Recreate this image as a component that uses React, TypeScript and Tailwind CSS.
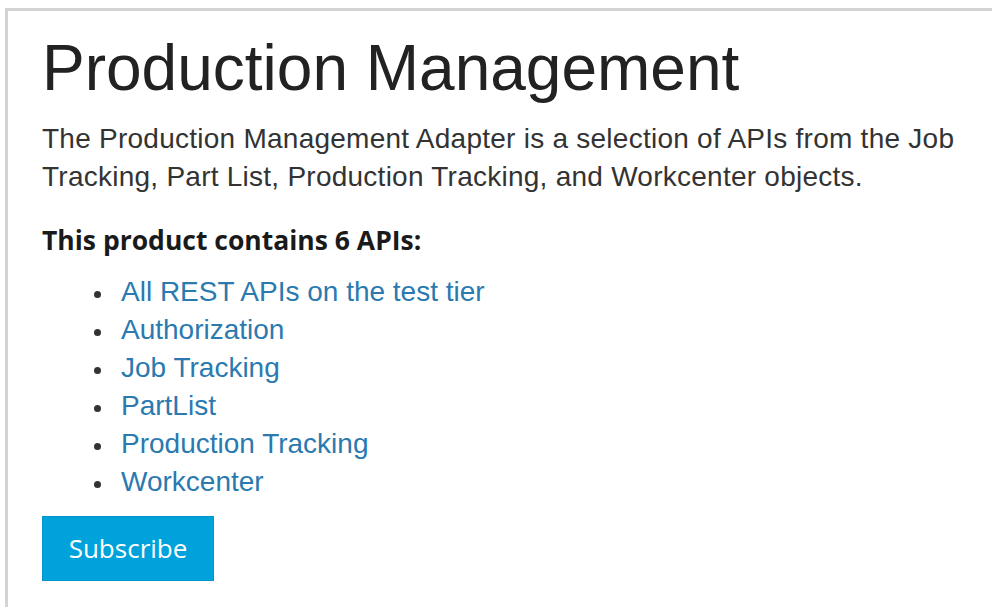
import React from "react";

const apis = [
  "All REST APIs on the test tier",
  "Authorization",
  "Job Tracking",
  "PartList",
  "Production Tracking",
  "Workcenter",
];

export default function App() {
  return (
    <div className="min-h-[607px] w-full overflow-hidden bg-white pl-[5px] pt-[8px]">
      <div className="min-h-[599px] border-l-[3px] border-t-[3px] border-[#d3d3d3] pl-[34px] pt-[22px] font-['Liberation_Sans',Arial,sans-serif]">
        <h1 className="text-[64px] leading-[70px] font-normal text-[#222]">
          Production Management
        </h1>
        <p className="mt-[17px] text-[28px] leading-[38px] tracking-[0.25px] text-[#333]">
          The Production Management Adapter is a selection of APIs from the Job
          <br />
          Tracking, Part List, Production Tracking, and Workcenter objects.
        </p>
        <h4 className="mt-[26px] font-['Open_Sans',sans-serif] text-[26.5px] font-bold leading-[36px] text-[#1a1a1a]">
          This product contains 6 APIs:
        </h4>
        <ul className="mt-[15px] list-disc pl-[72px] text-[28px] leading-[38px] text-[#333] marker:text-[#333] marker:text-[22px]">
          {apis.map((name) => (
            <li key={name} className="pl-[7px]">
              <a href="#" className="text-[#2a7ab0]">
                {name}
              </a>
            </li>
          ))}
        </ul>
        <button
          type="button"
          className="mt-[15px] h-[65px] w-[172px] border border-[#0096cc] bg-[#00a2db] font-['Open_Sans',sans-serif] text-[26px] text-white"
        >
          Subscribe
        </button>
      </div>
    </div>
  );
}
